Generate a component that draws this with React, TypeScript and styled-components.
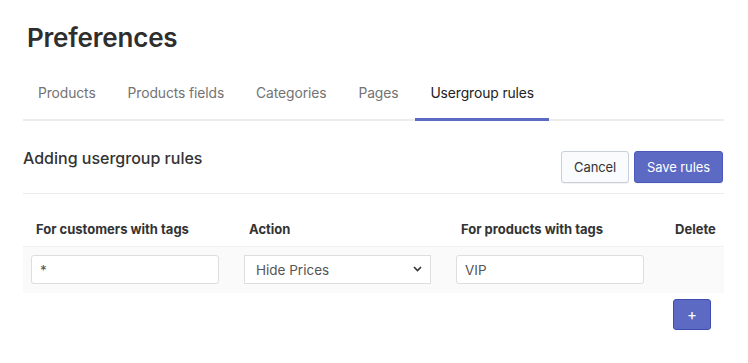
import React from "react";
import styled, { createGlobalStyle } from "styled-components";

const Global = createGlobalStyle`
  html, body { margin: 0; padding: 0; background: #fff; }
  body { font-family: Inter, "Noto Sans", "Liberation Sans", sans-serif; color: #333; }
  * { box-sizing: border-box; }
`;

const Page = styled.div`
  padding: 22px 24px 0 23px;
  width: 748px;
`;

const Title = styled.h1`
  margin: 0;
  font-size: 26px;
  line-height: 32px;
  font-weight: 600;
  color: #2e2e2e;
  letter-spacing: -0.2px;
  padding-left: 4px;
`;

const TabList = styled.div`
  display: flex;
  gap: 2px;
  margin-top: 18px;
  border-bottom: 2px solid #ededed;
`;

const Tab = styled.div<{ $active?: boolean }>`
  padding: 12px 15px 15px;
  font-size: 13.85px;
  line-height: 20px;
  letter-spacing: -0.1px;
  color: ${(p) => (p.$active ? "#222" : "#737373")};
  border-bottom: 3px solid ${(p) => (p.$active ? "#5c6ac4" : "transparent")};
  margin-bottom: -2px;
  margin-top: -1px;
`;

const SectionHeader = styled.div`
  display: flex;
  justify-content: space-between;
  align-items: flex-start;
  margin-top: 25px;
  padding-bottom: 10px;
  border-bottom: 1px solid #ebebeb;
`;

const SectionTitle = styled.h2`
  margin: 0;
  font-size: 16px;
  line-height: 24px;
  font-weight: 500;
  color: #333;
`;

const Actions = styled.div`
  display: flex;
  gap: 5px;
  margin-top: 5px;
  margin-right: 1px;
`;

const Button = styled.button<{ $primary?: boolean }>`
  height: 32px;
  padding: 0 12px;
  border-radius: 3px;
  font-family: inherit;
  font-size: 13px;
  letter-spacing: -0.1px;
  border: 1px solid ${(p) => (p.$primary ? "#4959bd" : "#c9d0d8")};
  background: ${(p) => (p.$primary ? "#5c6ac4" : "#fafbfc")};
  color: ${(p) => (p.$primary ? "#fff" : "#333")};
  box-shadow: 0 1px 0 rgba(22, 29, 37, 0.05);
`;

const Table = styled.div`
  margin-top: 18px;
  display: grid;
  grid-template-columns: 213px 212px 214px 1fr;
`;

const HeadCell = styled.div`
  padding: 8px 0 8px 13px;
  font-size: 13px;
  line-height: 18px;
  font-weight: 700;
  color: #333;
  border-bottom: 1px solid #f1f1f1;
  white-space: nowrap;
`;

const Cell = styled.div`
  background: #fafafa;
  padding: 8px 8px;
  height: 46px;
`;

const TextInput = styled.input`
  width: 188px;
  height: 29px;
  border: 1px solid #dedede;
  border-radius: 3px;
  background: #fff;
  padding: 0 8px;
  font-family: inherit;
  font-size: 13.5px;
  color: #555;
  outline: none;
`;

const SelectWrap = styled.div`
  position: relative;
  width: 187px;
`;

const Select = styled.select`
  appearance: none;
  width: 187px;
  height: 29px;
  border: 1px solid #dedede;
  border-radius: 0;
  background: #fff;
  padding: 0 11px;
  font-family: inherit;
  font-size: 13.5px;
  color: #555;
  outline: none;
`;

const Chevron = styled.svg`
  position: absolute;
  right: 9px;
  top: 11px;
  pointer-events: none;
`;

const AddRow = styled.div`
  display: flex;
  justify-content: flex-end;
  padding: 6px 13px 0 0;
`;

const AddButton = styled.button`
  width: 38px;
  height: 31px;
  border-radius: 3px;
  border: 1px solid #3f4eae;
  background: #5c6ac4;
  color: #fff;
  font-size: 15px;
  font-family: inherit;
  line-height: 1;
  padding: 0;
`;

export default function App() {
  const tabs = ["Products", "Products fields", "Categories", "Pages", "Usergroup rules"];
  return (
    <>
      <Global />
      <Page>
        <Title>Preferences</Title>
        <TabList>
          {tabs.map((t) => (
            <Tab key={t} $active={t === "Usergroup rules"}>
              {t}
            </Tab>
          ))}
        </TabList>
        <SectionHeader>
          <SectionTitle>Adding usergroup rules</SectionTitle>
          <Actions>
            <Button>Cancel</Button>
            <Button $primary>Save rules</Button>
          </Actions>
        </SectionHeader>
        <Table>
          <HeadCell>For customers with tags</HeadCell>
          <HeadCell>Action</HeadCell>
          <HeadCell>For products with tags</HeadCell>
          <HeadCell>Delete</HeadCell>
          <Cell>
            <TextInput defaultValue="*" />
          </Cell>
          <Cell>
            <SelectWrap>
              <Select defaultValue="hide">
                <option value="hide">Hide Prices</option>
              </Select>
              <Chevron width="9" height="6" viewBox="0 0 9 6">
                <path d="M1 1l3.5 3.5L8 1" fill="none" stroke="#333" strokeWidth="1.6" />
              </Chevron>
            </SelectWrap>
          </Cell>
          <Cell>
            <TextInput defaultValue="VIP" />
          </Cell>
          <Cell />
        </Table>
        <AddRow>
          <AddButton>+</AddButton>
        </AddRow>
      </Page>
    </>
  );
}
